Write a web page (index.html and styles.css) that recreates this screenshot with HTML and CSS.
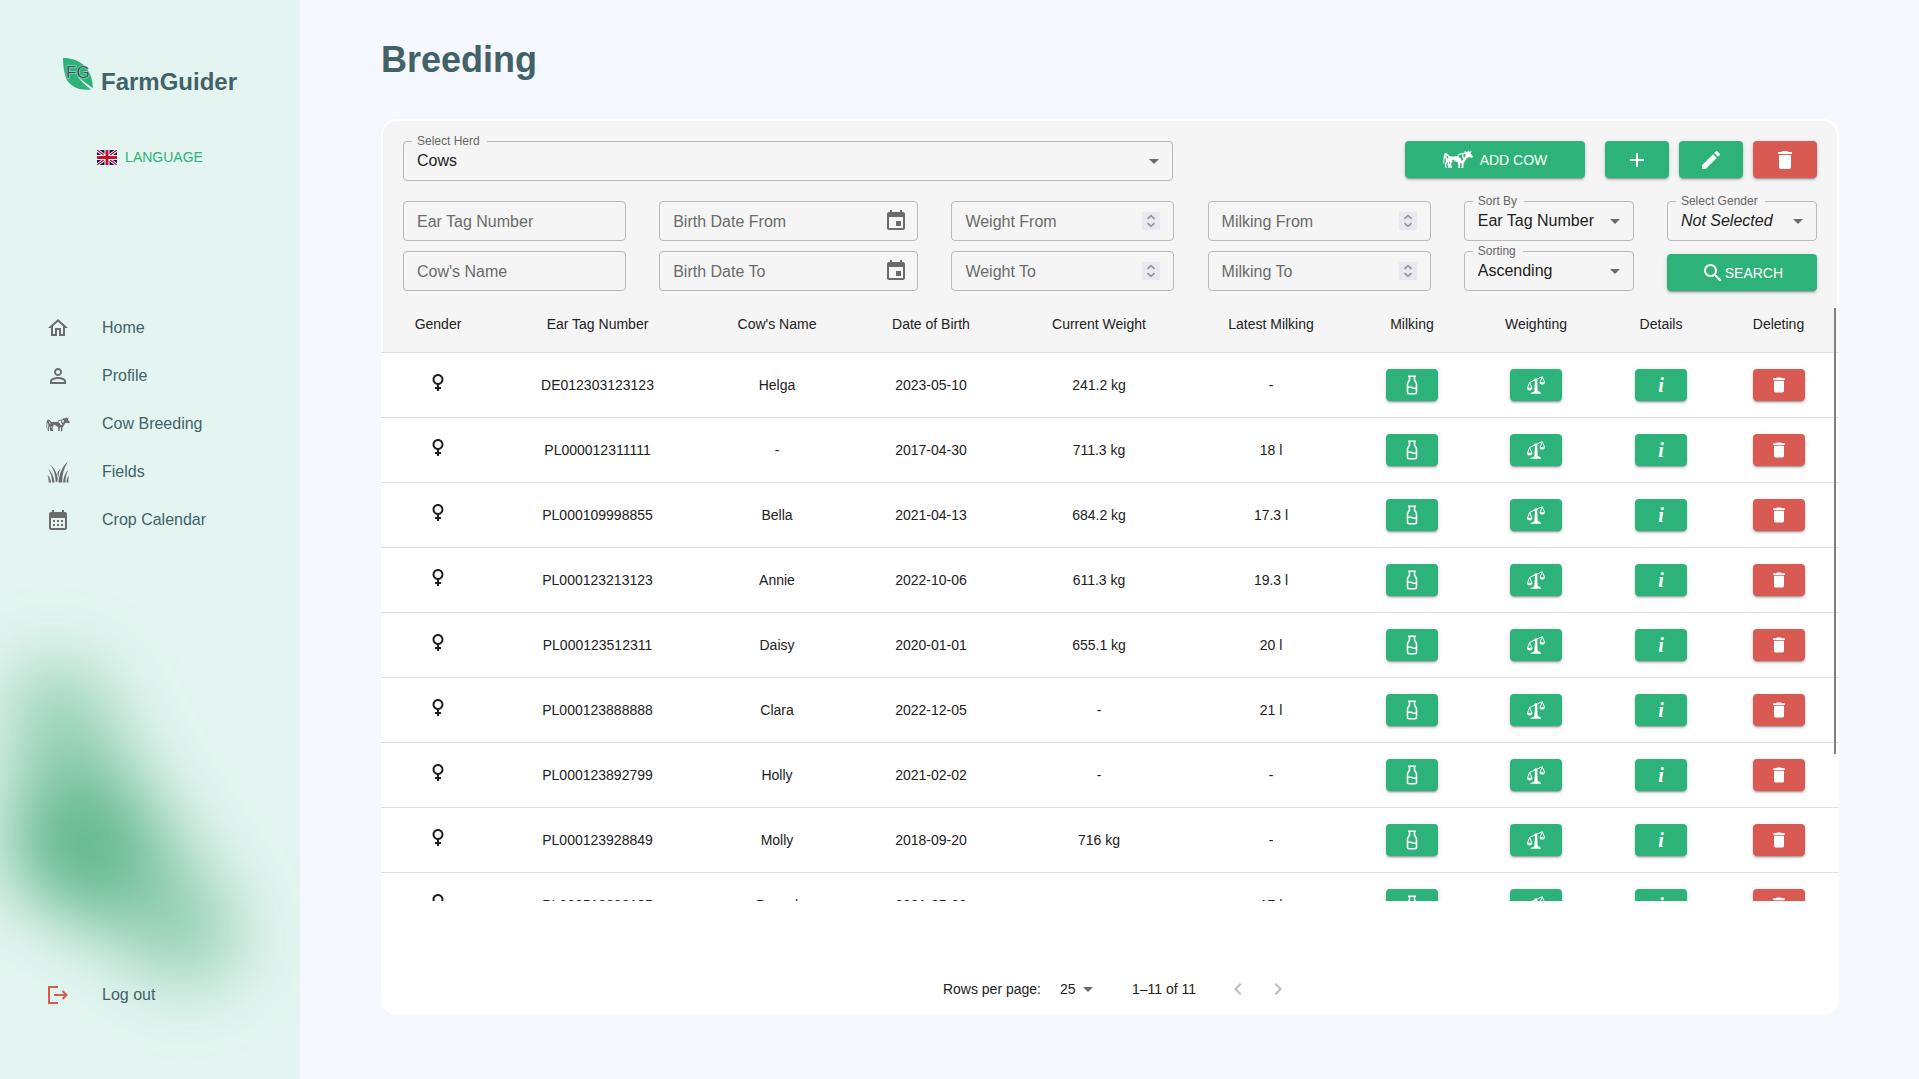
FILE: index.html
```html
<!DOCTYPE html>
<html lang="en">
<head>
<meta charset="utf-8">
<meta name="viewport" content="width=device-width, initial-scale=1">
<title>FarmGuider – Breeding</title>
<link rel="stylesheet" href="styles.css">
</head>
<body>
<svg class="sprite" aria-hidden="true">
  <symbol id="i-female" viewBox="0 0 24 24"><path d="M17.5 9.5C17.5 6.46 15.04 4 12 4S6.5 6.46 6.5 9.5c0 2.7 1.94 4.93 4.5 5.4V17H9v2h2v2h2v-2h2v-2h-2v-2.1c2.56-.47 4.5-2.7 4.5-5.4zm-9 0C8.5 7.57 10.07 6 12 6s3.5 1.57 3.5 3.5S13.930 13 12 13s-3.5-1.570-3.500-3.500z"/></symbol>
  <symbol id="i-trash" viewBox="0 0 24 24"><path d="M6 19c0 1.1.9 2 2 2h8c1.100 0 2-.9 2-2V7H6v12zM19 4h-3.500l-1-1h-5l-1 1H5v2h14V4z"/></symbol>
  <symbol id="i-down" viewBox="0 0 24 24"><path d="M7 10l5 5 5-5z"/></symbol>
  <symbol id="i-event" viewBox="0 0 24 24"><path d="M17 12h-5v5h5v-5zM16 1v2H8V1H6v2H5c-1.110 0-1.990.9-1.990 2L3 19c0 1.100.89 2 2 2h14c1.100 0 2-.9 2-2V5c0-1.100-.9-2-2-2h-1V1h-2zm3 18H5V8h14v11z"/></symbol>
  <symbol id="i-bottle" viewBox="0 0 20 20"><path d="M6 1.200h8M7.500 1.500v3.300c0 1.200-2 2.400-2 4.200v8.200c0 1 .6 1.500 1.500 1.500h6c.9 0 1.500-.5 1.500-1.500V9c0-1.800-2-3-2-4.200V1.500M6 12.300h3.500l1.500 1h3" fill="none" stroke="currentColor" stroke-width="1.600"/></symbol>
  <symbol id="i-scales" viewBox="0 0 20 20"><path d="M9 6.200l2.200-.9.500 10.900h1.300l2 1.800v.8H4.500V18l2.200-.7 1.600-1.100z"/><circle cx="9.800" cy="4.800" r="1.600"/><path d="M3.400 7.500L16.500 1.600M3.600 7.500L1.500 13M3.700 7.500l2.200 5.500M16.200 2l-2.100 5.200M16.300 2l2.300 5.200" fill="none" stroke="currentColor"/><path d="M.8 12.800h5.700c-.1 3.600-5.600 3.600-5.700 0zM13.500 7.200h5.500c-.1 3.200-5.400 3.200-5.500 0z"/></symbol>
  <symbol id="i-spin" viewBox="0 0 18 18"><path d="M5.500 6.800L9 3.600l3.500 3.200M5.500 11.200L9 14.400l3.500-3.200" fill="none" stroke="currentColor" stroke-width="1.800"/></symbol>
  <symbol id="i-cow" viewBox="0 0 30 19"><path d="M.3 13.500L.6 6.500 1.300 4C2 2.700 3.500 2.700 4.500 4l2 1.900c2.500.8 5.500.5 8 .1l1.500-2.200c2-.3 4-.6 5.800-1.300L21 1l3 1 2-2 .4 1.900L29 .8l-1.500 2.400L30 6.500l-.9 1.300-3.600-.5-1.800.9-1.600 3.100-1.500 1.900-.2 4.900h-2.200l.6-1.100-.2-3.900-1.300-.1-.3 4.800h-2.300l.7-1.100-.5-4.400-3-.8-2.500-.1-1.200 1.700.4 3.400.7 1.300H5.400l-1-3.900.8-2.200-1.500 1.300-.5 2 .6 2.800H2.300l-.6-3.200 1.300-3.200-.7-4.200-.8 1.500-.2 4.800z"/><path class="cow-spots" d="M3.300 5.500l1.500.4.700 3-1.600-.9zM15.800 5l3.500-.7-.5 2.400 1.700 2.800-1.700 1.400-1.200-2.800-1.600-.8zM20.800 3.800l1.900.4-.7 2.600-1 .9-.8-1.600zM8.500 10.600l1.700-1.200 1 1.200 2.200.4-2 .8zM5.800 13l1-1.600.3 1.200-.6 1.200z"/></symbol>
</svg>

<div class="shell">
  <aside class="sidebar">
    <svg class="glow" viewBox="0 0 300 560" preserveAspectRatio="none" aria-hidden="true">
      <defs><filter id="soft" x="-1" y="-1" width="3" height="3"><feGaussianBlur stdDeviation="36"/></filter></defs>
      <g filter="url(#soft)" fill="#42a874">
        <path d="M18 145L90 150L135 250L225 380L246 440L180 470L75 400L5 355Z" opacity=".5"/>
        <ellipse cx="80" cy="328" rx="64" ry="66" opacity=".62"/>
      </g>
    </svg>

    <div class="brand">
      <svg class="brand-leaf" viewBox="0 0 30 32" aria-hidden="true">
        <path d="M0 0C13 0 29 6 30 30C25 27 19 22 14 18C18 23 23 28 28 31.500C16 33 6 28 3 20C1 14 0 8 0 0Z" fill="#2db27a"/>
        <text x="3" y="20" class="brand-mark">FG</text>
      </svg>
      <span class="brand-name">FarmGuider</span>
    </div>

    <button class="language" type="button">
      <svg width="20" height="15" viewBox="0 0 60 45" aria-hidden="true">
        <path fill="#012169" d="M0 0h60v45H0z"/>
        <path stroke="#fff" stroke-width="9" d="M0 0l60 45M60 0L0 45"/>
        <path stroke="#c8102e" stroke-width="4" d="M0 0l60 45M60 0L0 45"/>
        <path stroke="#fff" stroke-width="15" d="M30 0v45M0 22.500h60"/>
        <path stroke="#c8102e" stroke-width="9" d="M30 0v45M0 22.500h60"/>
      </svg>
      LANGUAGE
    </button>

    <nav class="nav">
      <a href="#home"><svg viewBox="0 0 24 24"><path d="m12 5.690 5 4.500V18h-2v-6H9v6H7v-7.810l5-4.500M12 3 2 12h3v8h6v-6h2v6h6v-8h3L12 3z"/></svg>Home</a>
      <a href="#profile"><svg viewBox="0 0 24 24"><path d="M12 5.900c1.160 0 2.100.94 2.100 2.100s-.94 2.100-2.100 2.100S9.900 9.160 9.900 8s.94-2.100 2.100-2.100m0 9c2.970 0 6.100 1.460 6.100 2.100v1.100H5.900V17c0-.64 3.130-2.100 6.100-2.100M12 4C9.790 4 8 5.790 8 8s1.790 4 4 4 4-1.790 4-4-1.790-4-4-4zm0 9c-2.670 0-8 1.340-8 4v3h16v-3c0-2.660-5.330-4-8-4z"/></svg>Profile</a>
      <a href="#cows"><svg class="nav-cow"><use href="#i-cow"/></svg>Cow Breeding</a>
      <a href="#fields"><svg viewBox="0 0 24 24"><path d="M22 1.500C16.500 6 13.500 13 12.300 22.500h3.900C16 14.500 18 7.500 22 1.500zM3.500 4c4.700 3.800 7.300 9 8.400 14.500l-.9 3.500H9.700C9.500 15.500 8 9 3.500 4zM2 8.500c3.900 3.500 6 8.500 6.500 14H6.200C6 17.500 5 13 2 8.500zM14.500 8.500c-2 2-2.800 3.500-3.200 5.500l1.100 3.500c.2-3.500.7-6 2.100-9zM22.500 9.500c-3.500 3.500-5 8-5.400 13h2.300c.1-4.800 1-9 3.100-13zM1.500 15c2.200 1.800 3.200 4.500 3.500 7.500H2.700c0-2.500-.2-5-1.200-7.500zM22.800 15.500c-1.600 2-2.300 4.500-2.300 7h1.900c-.1-2.500 0-4.700.4-7z"/></svg>Fields</a>
      <a href="#calendar"><svg viewBox="0 0 24 24"><path d="M19 4h-1V2h-2v2H8V2H6v2H5c-1.110 0-1.990.9-1.990 2L3 20c0 1.100.89 2 2 2h14c1.100 0 2-.9 2-2V6c0-1.100-.9-2-2-2zm0 16H5V10h14v10zM9 14H7v-2h2v2zm4 0h-2v-2h2v2zm4 0h-2v-2h2v2zm-8 4H7v-2h2v2zm4 0h-2v-2h2v2zm4 0h-2v-2h2v2z"/></svg>Crop Calendar</a>
    </nav>

    <nav class="nav nav-bottom">
      <a href="#logout"><svg class="nav-exit" viewBox="0 0 24 24"><path d="M12 4H3v16h9M8 12h12M16.500 8l4 4-4 4" fill="none" stroke="currentColor" stroke-width="2"/></svg>Log out</a>
    </nav>
  </aside>

  <main class="main">
    <h1>Breeding</h1>

    <section class="card">
      <form class="filters">
        <div class="toolbar">
          <div class="field herd">
            <label for="herd">Select Herd</label>
            <select id="herd"><option>Cows</option></select>
            <svg class="arrow"><use href="#i-down"/></svg>
          </div>
          <div class="actions">
            <button class="btn add-cow" type="button"><svg class="cow"><use href="#i-cow"/></svg>ADD COW</button>
            <button class="btn" type="button" aria-label="Add herd"><svg viewBox="0 0 24 24"><path d="M19 13h-6v6h-2v-6H5v-2h6V5h2v6h6v2z"/></svg></button>
            <button class="btn" type="button" aria-label="Edit herd"><svg viewBox="0 0 24 24"><path d="M3 17.250V21h3.750L17.810 9.940l-3.750-3.750L3 17.250zM20.710 7.040c.39-.39.39-1.020 0-1.410l-2.340-2.340a1 1 0 0 0-1.410 0l-1.830 1.830 3.750 3.750 1.830-1.830z"/></svg></button>
            <button class="btn red" type="button" aria-label="Delete herd"><svg><use href="#i-trash"/></svg></button>
          </div>
        </div>

        <div class="criteria">
          <div class="pair">
            <div class="field"><input type="text" placeholder="Ear Tag Number" aria-label="Ear Tag Number"></div>
            <div class="field"><input type="text" placeholder="Cow's Name" aria-label="Cow's Name"></div>
          </div>
          <div class="pair dates">
            <div class="field"><input type="text" placeholder="Birth Date From" aria-label="Birth Date From"><button class="pick" type="button" aria-label="Choose start date"><svg><use href="#i-event"/></svg></button></div>
            <div class="field"><input type="text" placeholder="Birth Date To" aria-label="Birth Date To"><button class="pick" type="button" aria-label="Choose end date"><svg><use href="#i-event"/></svg></button></div>
          </div>
          <div class="pair">
            <div class="field"><input type="number" placeholder="Weight From" aria-label="Weight From"><svg class="spin"><use href="#i-spin"/></svg></div>
            <div class="field"><input type="number" placeholder="Weight To" aria-label="Weight To"><svg class="spin"><use href="#i-spin"/></svg></div>
          </div>
          <div class="pair">
            <div class="field"><input type="number" placeholder="Milking From" aria-label="Milking From"><svg class="spin"><use href="#i-spin"/></svg></div>
            <div class="field"><input type="number" placeholder="Milking To" aria-label="Milking To"><svg class="spin"><use href="#i-spin"/></svg></div>
          </div>
          <div class="pair sort">
            <div class="field"><label for="sort-by">Sort By</label><select id="sort-by"><option>Ear Tag Number</option></select><svg class="arrow"><use href="#i-down"/></svg></div>
            <div class="field"><label for="sorting">Sorting</label><select id="sorting"><option>Ascending</option></select><svg class="arrow"><use href="#i-down"/></svg></div>
          </div>
          <div class="pair last">
            <div class="field"><label for="gender">Select Gender</label><select id="gender" class="unset"><option>Not Selected</option></select><svg class="arrow"><use href="#i-down"/></svg></div>
            <button class="btn search" type="submit"><svg viewBox="0 0 24 24"><path d="M15.500 14h-.79l-.28-.27C15.410 12.590 16 11.110 16 9.500 16 5.910 13.090 3 9.500 3S3 5.910 3 9.500 5.910 16 9.500 16c1.610 0 3.090-.59 4.230-1.570l.27.28v.79l5 4.990L20.490 19l-4.990-5zm-6 0C7.010 14 5 11.990 5 9.500S7.010 5 9.500 5 14 7.010 14 9.500 11.990 14 9.500 14z"/></svg>SEARCH</button>
          </div>
        </div>
      </form>

      <div class="table-area">
        <div class="table-scroll">
          <table>
            <colgroup><col class="c-gender"><col class="c-tag"><col class="c-name"><col class="c-birth"><col class="c-weight"><col class="c-latest"><col class="c-milking"><col class="c-weighting"><col class="c-details"><col class="c-delete"></colgroup>
            <thead>
              <tr><th>Gender</th><th>Ear Tag Number</th><th>Cow's Name</th><th>Date of Birth</th><th>Current Weight</th><th>Latest Milking</th><th>Milking</th><th>Weighting</th><th>Details</th><th>Deleting</th></tr>
            </thead>
            <tbody>
              <tr><td><svg class="sex"><use href="#i-female"/></svg></td><td>DE012303123123</td><td>Helga</td><td>2023-05-10</td><td>241.2 kg</td><td>-</td><td><button class="btn small" aria-label="Milking"><svg><use href="#i-bottle"/></svg></button></td><td><button class="btn small" aria-label="Weighting"><svg><use href="#i-scales"/></svg></button></td><td><button class="btn small info">i</button></td><td><button class="btn small red" aria-label="Delete"><svg><use href="#i-trash"/></svg></button></td></tr>
              <tr><td><svg class="sex"><use href="#i-female"/></svg></td><td>PL000012311111</td><td>-</td><td>2017-04-30</td><td>711.3 kg</td><td>18 l</td><td><button class="btn small" aria-label="Milking"><svg><use href="#i-bottle"/></svg></button></td><td><button class="btn small" aria-label="Weighting"><svg><use href="#i-scales"/></svg></button></td><td><button class="btn small info">i</button></td><td><button class="btn small red" aria-label="Delete"><svg><use href="#i-trash"/></svg></button></td></tr>
              <tr><td><svg class="sex"><use href="#i-female"/></svg></td><td>PL000109998855</td><td>Bella</td><td>2021-04-13</td><td>684.2 kg</td><td>17.3 l</td><td><button class="btn small" aria-label="Milking"><svg><use href="#i-bottle"/></svg></button></td><td><button class="btn small" aria-label="Weighting"><svg><use href="#i-scales"/></svg></button></td><td><button class="btn small info">i</button></td><td><button class="btn small red" aria-label="Delete"><svg><use href="#i-trash"/></svg></button></td></tr>
              <tr><td><svg class="sex"><use href="#i-female"/></svg></td><td>PL000123213123</td><td>Annie</td><td>2022-10-06</td><td>611.3 kg</td><td>19.3 l</td><td><button class="btn small" aria-label="Milking"><svg><use href="#i-bottle"/></svg></button></td><td><button class="btn small" aria-label="Weighting"><svg><use href="#i-scales"/></svg></button></td><td><button class="btn small info">i</button></td><td><button class="btn small red" aria-label="Delete"><svg><use href="#i-trash"/></svg></button></td></tr>
              <tr><td><svg class="sex"><use href="#i-female"/></svg></td><td>PL000123512311</td><td>Daisy</td><td>2020-01-01</td><td>655.1 kg</td><td>20 l</td><td><button class="btn small" aria-label="Milking"><svg><use href="#i-bottle"/></svg></button></td><td><button class="btn small" aria-label="Weighting"><svg><use href="#i-scales"/></svg></button></td><td><button class="btn small info">i</button></td><td><button class="btn small red" aria-label="Delete"><svg><use href="#i-trash"/></svg></button></td></tr>
              <tr><td><svg class="sex"><use href="#i-female"/></svg></td><td>PL000123888888</td><td>Clara</td><td>2022-12-05</td><td>-</td><td>21 l</td><td><button class="btn small" aria-label="Milking"><svg><use href="#i-bottle"/></svg></button></td><td><button class="btn small" aria-label="Weighting"><svg><use href="#i-scales"/></svg></button></td><td><button class="btn small info">i</button></td><td><button class="btn small red" aria-label="Delete"><svg><use href="#i-trash"/></svg></button></td></tr>
              <tr><td><svg class="sex"><use href="#i-female"/></svg></td><td>PL000123892799</td><td>Holly</td><td>2021-02-02</td><td>-</td><td>-</td><td><button class="btn small" aria-label="Milking"><svg><use href="#i-bottle"/></svg></button></td><td><button class="btn small" aria-label="Weighting"><svg><use href="#i-scales"/></svg></button></td><td><button class="btn small info">i</button></td><td><button class="btn small red" aria-label="Delete"><svg><use href="#i-trash"/></svg></button></td></tr>
              <tr><td><svg class="sex"><use href="#i-female"/></svg></td><td>PL000123928849</td><td>Molly</td><td>2018-09-20</td><td>716 kg</td><td>-</td><td><button class="btn small" aria-label="Milking"><svg><use href="#i-bottle"/></svg></button></td><td><button class="btn small" aria-label="Weighting"><svg><use href="#i-scales"/></svg></button></td><td><button class="btn small info">i</button></td><td><button class="btn small red" aria-label="Delete"><svg><use href="#i-trash"/></svg></button></td></tr>
              <tr><td><svg class="sex"><use href="#i-female"/></svg></td><td>PL000512333125</td><td>Pascal</td><td>2021-05-20</td><td>-</td><td>17 l</td><td><button class="btn small" aria-label="Milking"><svg><use href="#i-bottle"/></svg></button></td><td><button class="btn small" aria-label="Weighting"><svg><use href="#i-scales"/></svg></button></td><td><button class="btn small info">i</button></td><td><button class="btn small red" aria-label="Delete"><svg><use href="#i-trash"/></svg></button></td></tr>
            </tbody>
          </table>
        </div>
        <span class="thumb"></span>
      </div>

      <footer class="pager">
        <label for="rows">Rows per page:</label>
        <div class="rows"><select id="rows"><option>25</option></select><svg class="arrow"><use href="#i-down"/></svg></div>
        <span class="range">1–11 of 11</span>
        <div class="steps">
          <button type="button" disabled aria-label="Previous page"><svg viewBox="0 0 24 24"><path d="M15.410 7.410L14 6l-6 6 6 6 1.410-1.410L10.830 12z"/></svg></button>
          <button type="button" disabled aria-label="Next page"><svg viewBox="0 0 24 24"><path d="M10 6L8.590 7.410 13.170 12l-4.580 4.590L10 18l6-6z"/></svg></button>
        </div>
      </footer>
    </section>
  </main>
</div>
</body>
</html>
```
FILE: styles.css
```css
:root {
  --green: #2db27a;
  --red: #d85a53;
  --heading: #426268;
  --sidebar: #e4f5f1;
  --grey-panel: #f5f5f5;
  --line: #e0e0e0;
  --outline: #b9b9b9;
  --muted: #6b6b6b;
}

* { box-sizing: border-box; }

body {
  margin: 0;
  background: #f5f8fe;
  color: #212121;
  font: 14px/20px "Liberation Sans", Arial, sans-serif;
}

button, input, select { font: inherit; color: inherit; }
svg { width: 24px; height: 24px; fill: currentColor; flex: none; }
.sprite { display: none; }

.shell { display: flex; height: 100vh; min-height: 760px; }

/* Sidebar */
.sidebar {
  --spot: var(--sidebar);
  position: relative;
  display: flex;
  flex-direction: column;
  flex: none;
  width: 300px;
  padding: 58px 0 60px;
  background: var(--sidebar);
  overflow: hidden;
}
.sidebar > * { position: relative; }
.sidebar > .glow {
  position: absolute;
  left: 0;
  bottom: 0;
  width: 300px;
  height: 560px;
}
.brand { display: flex; justify-content: center; align-items: flex-end; gap: 8px; }
.brand-leaf { width: 30px; height: 32px; margin-bottom: 4px; overflow: visible; }
.brand-mark {
  font-size: 17px;
  fill: #35535c;
  stroke: #bfe6d5;
  stroke-width: 1px;
  paint-order: stroke;
}
.brand-name { color: var(--heading); font-size: 24px; line-height: 24px; font-weight: 700; }
.language {
  display: flex;
  align-items: center;
  align-self: center;
  gap: 8px;
  height: 32px;
  margin-top: 47px;
  padding: 0;
  border: 0;
  background: none;
  color: var(--green);
}
.language svg { width: 20px; height: 15px; }
.nav { margin-top: 131px; }
.nav a {
  display: flex;
  align-items: center;
  gap: 32px;
  height: 48px;
  padding-left: 46px;
  color: var(--heading);
  font-size: 16px;
  text-decoration: none;
}
.nav svg { color: var(--muted); }
.nav-cow { height: 15px; }
.nav .nav-exit { color: var(--red); }
.nav-bottom { margin-top: auto; }
.cow-spots { fill: var(--spot); }

/* Page */
.main {
  display: flex;
  flex-direction: column;
  flex: 1;
  min-width: 0;
  padding: 39px 80px 64px 81px;
}
h1 { margin: 0 0 38px; color: var(--heading); font-size: 36px; line-height: 42px; }
.card {
  display: flex;
  flex-direction: column;
  flex: 1;
  min-height: 0;
  border-radius: 16px;
  background: #fff;
}

/* Filters */
.filters {
  margin: 2px 2px 0;
  padding: 20px 20px 5px;
  border-radius: 14px 14px 0 0;
  background: var(--grey-panel);
}
.toolbar, .criteria { display: flex; justify-content: space-between; align-items: flex-start; }
.criteria { margin-top: 20px; align-items: stretch; }
.actions { display: flex; gap: 10px; }
.pair { display: flex; flex-direction: column; justify-content: space-between; gap: 10px; width: 223px; }
.dates { width: 259px; }
.sort { width: 170px; }
.last { width: 150px; }
.field {
  position: relative;
  display: flex;
  align-items: center;
  height: 40px;
  border: 1px solid var(--outline);
  border-radius: 4px;
  font-size: 16px;
}
.herd { width: 770px; }
.field label {
  position: absolute;
  top: -9px;
  left: 8px;
  padding: 0 7px 0 5px;
  background: var(--grey-panel);
  color: #666;
  font-size: 12px;
  line-height: 16px;
}
.field input, .field select {
  flex: 1;
  min-width: 0;
  height: 100%;
  padding: 2px 0 0 13px;
  border: 0;
  background: none;
  appearance: none;
}
.field select { padding-top: 0; }
.field input::placeholder { color: #6b6b6b; opacity: 1; }
.field input[type="number"] { appearance: textfield; }
.field input::-webkit-inner-spin-button { display: none; }
.unset { font-style: italic; }
.arrow { position: absolute; right: 6px; color: var(--muted); pointer-events: none; }
.pick { display: flex; margin-right: 9px; padding: 0; border: 0; background: none; color: var(--muted); }
.spin { width: 18px; height: 18px; margin-right: 13px; background: #e8e8ee; color: #9494a2; }

/* Buttons */
.btn {
  display: flex;
  justify-content: center;
  align-items: center;
  width: 64px;
  height: 37px;
  padding: 0;
  border: 0;
  border-radius: 4px;
  background: var(--green);
  color: #fff;
  box-shadow: 0 3px 1px -2px rgba(0, 0, 0, .2), 0 2px 2px rgba(0, 0, 0, .14), 0 1px 5px rgba(0, 0, 0, .12);
}
.btn.red { background: var(--red); }
.add-cow { --spot: var(--green); gap: 7px; width: 180px; margin-right: 10px; }
.cow { width: 30px; height: 19px; }
.search { width: 100%; }
.small { width: 52px; height: 32px; margin: 0 auto; }
.small svg { width: 20px; height: 20px; }
.info { font: italic 700 20px/20px "Liberation Serif", serif; }

/* Table */
.table-area { position: relative; flex: 1; min-height: 0; }
.table-scroll { height: 100%; overflow: hidden auto; scrollbar-width: none; }
table { width: 100%; table-layout: fixed; border-collapse: separate; border-spacing: 0; }
th, td { padding: 0; border-bottom: 1px solid var(--line); font-weight: 400; text-align: center; }
th { position: sticky; top: 0; z-index: 1; height: 57px; background: var(--grey-panel); }
th:first-child { box-shadow: inset 2px 0 #fff; }
th:last-child { box-shadow: inset -2px 0 #fff; }
th:last-child, td:last-child { padding-right: 4px; }
td { height: 65px; }
.sex { display: block; margin: 0 auto 6px; }
.c-gender { width: 114px; }
.c-tag { width: 205px; }
.c-name { width: 154px; }
.c-birth { width: 154px; }
.c-weight { width: 182px; }
.c-latest { width: 162px; }
.c-milking { width: 120px; }
.c-weighting { width: 128px; }
.c-details { width: 122px; }
.c-delete { width: 117px; }
.thumb {
  position: absolute;
  z-index: 2;
  top: 12px;
  right: 3px;
  width: 2px;
  height: 446px;
  background: #808080;
}

/* Pagination */
.pager {
  display: flex;
  justify-content: center;
  align-items: center;
  height: 52px;
  margin-top: 62px;
  padding-left: 13px;
}
.rows { position: relative; display: flex; align-items: center; margin: 0 32px 0 11px; }
.rows select { width: 48px; height: 24px; padding: 0 0 0 8px; border: 0; background: none; appearance: none; }
.rows .arrow { right: 0; }
.range { margin-right: 30px; }
.steps { display: flex; gap: 16px; }
.steps button { display: flex; padding: 0; border: 0; background: none; color: #bdbdbd; }
```
